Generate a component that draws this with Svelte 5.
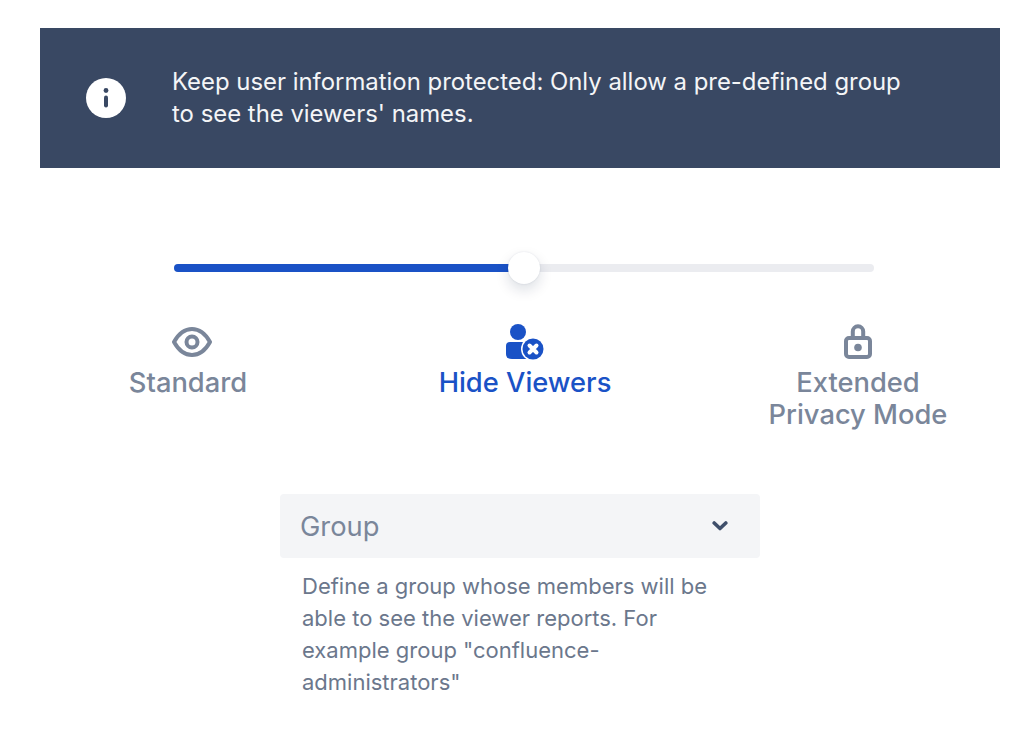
<script>
  const options = [
    { label: 'Standard', cls: 'standard' },
    { label: 'Hide Viewers', cls: 'hide active' },
    { label: 'Extended Privacy Mode', cls: 'extended' }
  ];
</script>

<main class="page">
  <section class="banner">
    <svg class="info" width="40" height="40" viewBox="0 0 40 40" aria-hidden="true">
      <circle cx="20" cy="20" r="20" fill="#fff" />
      <circle cx="20" cy="12.5" r="2.4" fill="#394863" />
      <rect x="18" y="17.5" width="4" height="12" rx="2" fill="#394863" />
    </svg>
    <p>Keep user information protected: Only allow a pre-defined group to see the viewers' names.</p>
  </section>

  <section class="slider">
    <div class="track">
      <div class="fill"></div>
      <div class="thumb"></div>
    </div>
  </section>

  <section class="options">
    {#each options as o}
      <div class="option {o.cls}">
        <div class="icon">
          {#if o.cls === 'standard'}
            <svg class="eye" width="40" height="32" viewBox="0 0 40 32" aria-hidden="true">
              <path d="M2 16C7 7 13 3 20 3s13 4 18 13c-5 9-11 13-18 13S7 25 2 16Z" fill="none" stroke="#7a869a" stroke-width="4" stroke-linejoin="round" />
              <circle cx="20" cy="16" r="5.5" fill="none" stroke="#7a869a" stroke-width="4" />
            </svg>
          {:else if o.cls === 'hide active'}
            <svg width="40" height="38" viewBox="0 0 40 38" aria-hidden="true">
              <circle cx="13" cy="9" r="8" fill="#1a52c6" />
              <path d="M1 23a4 4 0 0 1 4-4h16a4 4 0 0 1 4 4v13H7q-6 0-6-5Z" fill="#1a52c6" />
              <circle cx="28" cy="26" r="12" fill="#fff" />
              <circle cx="28" cy="26" r="10.5" fill="#1a52c6" />
              <path d="M24.5 22.5l7 7M31.5 22.5l-7 7" stroke="#fff" stroke-width="4" stroke-linecap="round" />
            </svg>
          {:else}
            <svg class="lock" width="28" height="36" viewBox="0 0 28 36" aria-hidden="true">
              <path d="M8.8 14V7.5a5.2 5.2 0 0 1 10.4 0V14" fill="none" stroke="#7a869a" stroke-width="4" />
              <rect x="2" y="14" width="24" height="19" rx="3" fill="none" stroke="#7a869a" stroke-width="4" />
              <circle cx="14" cy="23.5" r="3.8" fill="#7a869a" />
            </svg>
          {/if}
        </div>
        <span>{o.label}</span>
      </div>
    {/each}
  </section>

  <section class="field">
    <div class="select">
      <span>Group</span>
      <svg width="16" height="12" viewBox="0 0 16 12" aria-hidden="true">
        <path d="M2.200 3 8 8.500 13.800 3" fill="none" stroke="#3f4f6b" stroke-width="3.600" stroke-linecap="round" stroke-linejoin="round" />
      </svg>
    </div>
    <p class="help">Define a group whose members will be able to see the viewer reports. For example group "confluence-administrators"</p>
  </section>
</main>

<style>
  :global(body) {
    margin: 0;
    background: #fff;
  }
  .page {
    width: 1024px;
    height: 744px;
    box-sizing: border-box;
    padding: 28px 24px 0 40px;
    font-family: Inter, "Liberation Sans", sans-serif;
    overflow: hidden;
  }
  .banner {
    width: 960px;
    height: 140px;
    box-sizing: border-box;
    background: #394863;
    display: flex;
    align-items: center;
    padding: 0 46px;
    gap: 46px;
  }
  .info {
    flex: none;
  }
  .banner p {
    margin: 0;
    color: #f4f5f7;
    font-size: 23.9px;
    line-height: 32px;
    width: 740px;
  }
  .slider {
    padding: 96px 0 0 134px;
  }
  .track {
    position: relative;
    width: 700px;
    height: 8px;
    border-radius: 4px;
    background: #ebecf0;
  }
  .fill {
    width: 350px;
    height: 8px;
    border-radius: 4px 0 0 4px;
    background: #1a52c6;
  }
  .thumb {
    position: absolute;
    left: 334px;
    top: -12px;
    width: 32px;
    height: 32px;
    border-radius: 50%;
    background: #fff;
    box-shadow: 0 6px 14px rgba(9, 30, 66, 0.14), 0 0 2px rgba(9, 30, 66, 0.12);
  }
  .options {
    display: grid;
    grid-template-columns: 296px 378px 288px;
    padding-top: 50px;
    color: #7a869a;
    font-size: 27.3px;
    line-height: 32px;
    font-weight: 500;
    text-align: center;
  }
  .option {
    display: flex;
    flex-direction: column;
    align-items: center;
  }
  .option span {
    max-width: 200px;
  }
  .icon {
    height: 40px;
    margin-bottom: 5px;
    display: flex;
    align-items: center;
    justify-content: center;
  }
  .eye {
    margin-left: 8px;
  }
  .active {
    color: #1a52c6;
  }
  .field {
    margin: 63px 0 0 240px;
    width: 480px;
  }
  .select {
    height: 64px;
    box-sizing: border-box;
    background: #f4f5f7;
    border-radius: 4px;
    display: flex;
    align-items: center;
    justify-content: space-between;
    padding: 0 32px 0 20px;
    color: #7a869a;
    font-size: 27.3px;
  }
  .help {
    margin: 12px 0 0;
    padding: 0 22px;
    color: #6b778c;
    font-size: 22px;
    line-height: 32px;
  }
</style>
